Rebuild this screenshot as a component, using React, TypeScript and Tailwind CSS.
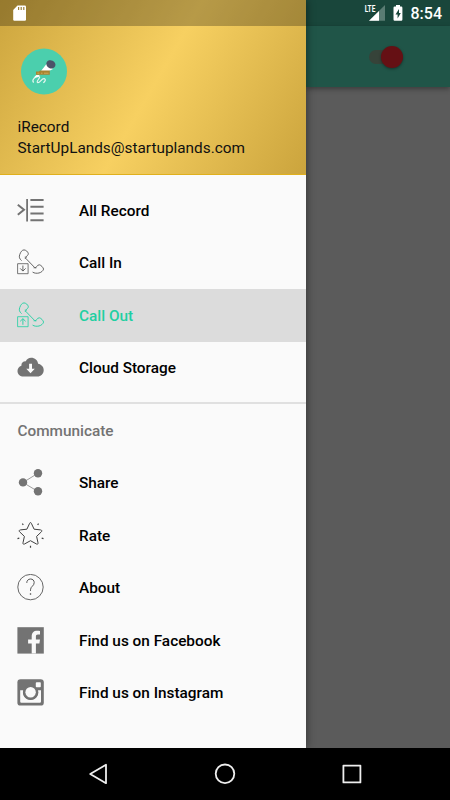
import type { ReactNode } from 'react'

const gray = '#737373'

function RecordListIcon() {
	return (
		<svg width="27" height="27" viewBox="0 0 27 27" fill="none" stroke={gray}>
			<path d="M.8 7.7 7 12.7.8 17.7" strokeWidth="2" />
			<path d="M10.1 2v22.5" strokeWidth="1.8" />
			<path d="M13.4 3h13.2M13.4 9.7h13.2M13.4 16.4h13.2M13.4 23.2h13.2" strokeWidth="2" />
		</svg>
	)
}

function CallIcon({ out = false }: { out?: boolean }) {
	return (
		<svg
			width="27"
			height="27"
			viewBox="0 0 27 27"
			fill="none"
			stroke={out ? '#1fcfa2' : '#555555'}
			strokeWidth="0.9"
		>
			<path d="M4.6 11.6C2.4 10 1.8 7.8 2.8 5.4 3.7 2.9 5 1 7 .9c2 .2 3.8 1.7 4.3 3.6.3 1.9-2.4 2.4-2.5 4.9l9.2 9.5c1.6.1 1.8-3.2 4.4-3.1 1.8.4 3.6 2.5 4.2 4.3-.5 1.7-2.4 3.4-4.6 3.9-2.3.5-4.6.3-6.4-.9" />
			<path d="M16.5 18.8h3M8.3 10V7.4" strokeWidth=".7" />
			<path d="M.6 14.7h10.5v10H.6z" strokeWidth=".8" />
			{out ? (
				<path d="M5.9 22.8v-6M3.2 19.3l2.7-2.6 2.7 2.6" />
			) : (
				<path d="M5.9 16.5v5.4M3.2 19.4l2.7 2.7 2.7-2.7" />
			)}
		</svg>
	)
}

function CloudIcon() {
	return (
		<svg width="27" height="27" viewBox="0 0 27 27">
			<path
				d="M6.6 22.6C3 22.6.5 20.1.5 17c0-2.5 1.5-4.6 3.9-5.3C4.2 9 6 7.2 8.8 7.3 9.8 5 11.7 3.8 14.1 3.8c3.8 0 6.5 2.5 7 6 3.2.8 5.6 3 5.6 6.5 0 3.7-2.8 6.3-6.3 6.3z"
				fill={gray}
			/>
			<path d="M12.1 9.8H15v4.9h2.8l-4.3 4.5-4.2-4.5h2.8z" fill="#fafafa" />
		</svg>
	)
}

function ShareIcon() {
	return (
		<svg width="27" height="27" viewBox="0 0 27 27" fill={gray}>
			<path d="M20.5 4.5 6 13.5l14.5 8.7" fill="none" stroke={gray} strokeWidth="0.7" />
			<circle cx="21" cy="4.3" r="4.2" />
			<circle cx="6" cy="13.4" r="4.2" />
			<circle cx="21" cy="22.2" r="4.2" />
		</svg>
	)
}

function RateIcon() {
	return (
		<svg width="27" height="27" viewBox="0 0 27 27" fill="none" stroke="#404040">
			<path
				d="M13.5.6c.5 0 .7.3.9.8l2.7 5.8 6.5.7c1.3.2 1.6 1.1.8 1.9l-4.8 4.6 1.4 6.4c.2 1.2-.5 1.8-1.5 1.2l-6-3.3-6 3.3c-1 .6-1.7 0-1.5-1.2l1.4-6.4-4.8-4.6c-.8-.8-.5-1.7.8-1.9l6.5-.7 2.7-5.8c.2-.5.4-.8.9-.8z"
				strokeWidth="1"
			/>
			<path
				d="m5.3 1.6 1 1.2M21.6 1.6l-1 1.2M.5 16.6l1.8-.5M26.5 16.6l-1.8-.5M13.5 23.8v1.9"
				strokeWidth="1.2"
			/>
		</svg>
	)
}

function AboutIcon() {
	return (
		<svg width="27" height="27" viewBox="0 0 27 27" fill="none" stroke="#555555">
			<circle cx="13.5" cy="13.1" r="12.7" strokeWidth="0.9" />
			<path
				d="M9.8 8.9C9.7 6.7 11.2 5 13.5 5c2.2 0 3.7 1.4 3.7 3.6 0 3.5-3.7 3.7-3.7 7.2v1.1"
				strokeWidth="1"
			/>
			<circle cx="13.5" cy="20" r=".8" fill="#404040" stroke="none" />
		</svg>
	)
}

function FacebookIcon() {
	return (
		<svg width="27" height="27" viewBox="0 0 27 27">
			<path d="M.4.2h26.4v26.4H.4z" fill={gray} />
			<path
				d="M14.7 26.6V16.5h-3.6v-4h3.6V9.4c0-3.7 2.1-5.7 5.5-5.7 1.2 0 2 .1 2.8.2v3.6h-2c-1.6 0-2.1.8-2.1 2.1v2.9h4.1l-.6 4h-3.5v10.1z"
				fill="#fafafa"
			/>
		</svg>
	)
}

function InstagramIcon() {
	return (
		<svg width="27" height="27" viewBox="0 0 27 27">
			<rect x=".4" y=".2" width="26.4" height="26.4" rx="3.2" fill={gray} />
			<path
				d="M3.2 11.2h3a7.7 7.7 0 1 0 14.8 0h3v11.4q0 1.2-1.2 1.2H4.4q-1.2 0-1.2-1.2z"
				fill="#fafafa"
			/>
			<circle cx="13.6" cy="13.3" r="7.5" fill={gray} />
			<circle cx="13.6" cy="13.3" r="5.2" fill="#fafafa" />
			<rect x="18.8" y="3.2" width="5" height="5" rx=".8" fill="#fafafa" />
		</svg>
	)
}

function MicLogo() {
	return (
		<svg className="mt-[22px] ml-[21px] block" width="46" height="47" viewBox="0 -.4 46 47">
			<circle cx="23" cy="23" r="23" fill="#4bcfad" />
			<path d="M25.5 15.5 32 20.7 28 22.5h-8z" fill="#ffffff" />
			<ellipse cx="29.9" cy="15.9" rx="4.7" ry="4" transform="rotate(25 29.9 15.9)" fill="#4b5268" />
			<path d="M15 23.2h3l1-1h9.8v4.2H15z" fill="#a8832f" />
			<path d="M16.4 24.8h2M20 24.8h1.5M23 24.8h4.5" stroke="#d9b45d" strokeWidth=".8" />
			<path
				d="M12.6 34.2c-2.2-2.8 1.2-5.8 4.6-6.1 4.3-.3-2.7 4.7-.6 6 2.1 1.1 3.9-4.3 6.6-3.8 2.1.6.8 3-.9 4.1"
				fill="none"
				stroke="#e5f5ef"
				strokeWidth="1.2"
			/>
			<path d="m12.6 29.4 2.7-2.8h3.4l-1.4 1.9z" fill="#ffffff" />
		</svg>
	)
}

type Item = { label: string; icon: ReactNode; selected?: boolean }

const recordItems: Item[] = [
	{ label: 'All Record', icon: <RecordListIcon /> },
	{ label: 'Call In', icon: <CallIcon /> },
	{ label: 'Call Out', icon: <CallIcon out />, selected: true },
	{ label: 'Cloud Storage', icon: <CloudIcon /> },
]

const communicateItems: Item[] = [
	{ label: 'Share', icon: <ShareIcon /> },
	{ label: 'Rate', icon: <RateIcon /> },
	{ label: 'About', icon: <AboutIcon /> },
	{ label: 'Find us on Facebook', icon: <FacebookIcon /> },
	{ label: 'Find us on Instagram', icon: <InstagramIcon /> },
]

function MenuList({ items }: { items: Item[] }) {
	return (
		<ul>
			{items.map(({ label, icon, selected }) => (
				<li
					key={label}
					className={
						selected
							? 'flex h-[52.5px] items-center bg-[#dcdcdc] pl-[17px] text-[#1fcfa2]'
							: 'flex h-[52.5px] items-center pl-[17px] text-black'
					}
				>
					<span className="mr-[35px] block size-[27px]">{icon}</span>
					<span className="pt-[2px] text-[15.35px] font-medium">{label}</span>
				</li>
			))}
		</ul>
	)
}

function Drawer() {
	return (
		<aside className="relative z-10 flex w-[306px] shrink-0 flex-col bg-[#fafafa] shadow-[1px_0_8px_rgba(0,0,0,0.4)]">
			<header className="h-[175px] border-b border-[#e0b01c] bg-[linear-gradient(120deg,#cca53e_0%,#f7d061_50%,#cba43d_100%)]">
				<div className="h-[26px] bg-black/26 pt-[5px] pl-[13px]">
					<svg className="block" width="14" height="17" viewBox="0 0 14 17">
						<path d="M4.5.5h7.3q1.2 0 1.2 1.2v12.9q0 1.2-1.2 1.2H1.4q-1.2 0-1.2-1.2V5z" fill="#ffffff" />
						<path d="M5.6 2v3M8.2 2v3M10.8 2v3" stroke="#9d8239" strokeWidth="1.2" />
					</svg>
				</div>
				<MicLogo />
				<div className="mt-[22px] pl-[17.5px] text-[15.35px] leading-[21px] text-[#111111]">
					<p>iRecord</p>
					<p>StartUpLands@startuplands.com</p>
				</div>
			</header>
			<nav className="pt-[9px]">
				<MenuList items={recordItems} />
				<div className="mt-[8px] border-t-2 border-[#e0e0e0]">
					<h2 className="flex h-[52.5px] items-center pt-[2px] pl-[17.5px] text-[15.35px] font-medium text-[#737373]">
						Communicate
					</h2>
				</div>
				<MenuList items={communicateItems} />
			</nav>
		</aside>
	)
}

function StatusBar() {
	return (
		<div className="flex h-[26px] items-center justify-end bg-[#19463b] pr-[8px] text-white">
			<svg width="42" height="22" viewBox="0 0 42 22">
				<path d="M22 3v15.8H6z" fill="#5a7c73" />
				<path d="M16 8.9v9.9H6z" fill="#ffffff" />
				<text x="1.8" y="9.8" fill="#ffffff" fontSize="8.8" fontWeight="700" textLength="10.5" lengthAdjust="spacingAndGlyphs">
					LTE
				</text>
				<path d="M33 2.9h4v1.7h1.2q1.2 0 1.2 1.2v11.8q0 1.2-1.2 1.2h-6.5q-1.2 0-1.2-1.2V5.8q0-1.2 1.2-1.2H33z" fill="#ffffff" />
				<path d="m36 7-3.5 5.5h2.1v4l3.2-5.5h-1.8z" fill="#19463b" />
			</svg>
			<span className="ml-[6px] pt-[2px] text-[16px] leading-none font-medium">8:54</span>
		</div>
	)
}

function Content() {
	return (
		<main className="flex min-w-0 flex-1 flex-col bg-[#5b5b5b]">
			<StatusBar />
			<div className="flex h-[61px] justify-end bg-[#205548] pt-[20px] pr-[47px] shadow-[0_2px_5px_rgba(0,0,0,0.35)]">
				<div className="mt-[4px] flex h-[14px] w-[34px] items-center justify-end rounded-full bg-[#364339]">
					<span className="size-[22px] shrink-0 rounded-full bg-[#651014] shadow-[0_1px_3px_rgba(0,0,0,0.4)]" />
				</div>
			</div>
		</main>
	)
}

function NavigationBar() {
	return (
		<footer className="relative z-20 flex h-[52px] items-center bg-black pl-[84px]">
			<svg width="282" height="28" viewBox="0 0 282 28" fill="none" stroke="#eeeeee" strokeWidth="1.8" strokeLinejoin="round">
				<path d="M22 4.8v18.4L6.2 14z" />
				<circle cx="141" cy="13.8" r="9.3" />
				<rect x="259.4" y="5.6" width="17" height="16.8" />
			</svg>
		</footer>
	)
}

export default function App() {
	return (
		<div className="flex h-[800px] w-[450px] flex-col overflow-hidden font-['Roboto',sans-serif]">
			<div className="flex h-[748px] overflow-hidden">
				<Drawer />
				<Content />
			</div>
			<NavigationBar />
		</div>
	)
}
